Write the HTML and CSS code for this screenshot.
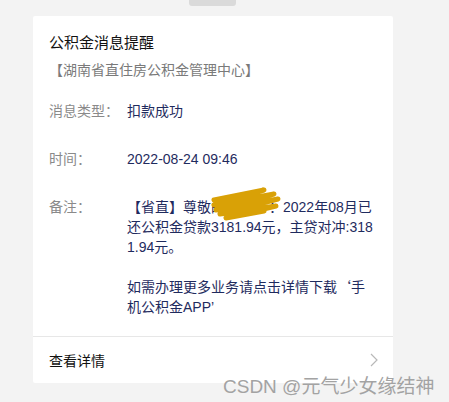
FILE: index.html
```html
<!DOCTYPE html>
<html lang="zh-CN">
<head>
  <meta charset="UTF-8">
  <title>公积金消息提醒</title>
  <link rel="stylesheet" href="styles.css">
</head>
<body>
  <!-- time tag cut off at the top -->
  <div class="time-tag"></div>

  <div class="card">
    <div class="card-body">
      <h1 class="title">公积金消息提醒</h1>
      <p class="sender">【湖南省直住房公积金管理中心】</p>

      <div class="row">
        <span class="label">消息类型：</span>
        <span class="value">扣款成功</span>
      </div>

      <div class="row">
        <span class="label">时间：</span>
        <span class="value">2022-08-24 09:46</span>
      </div>

      <div class="row">
        <span class="label">备注：</span>
        <div class="value">
          <p class="note">【省直】尊敬的<span class="redacted"></span>：2022年08月已<br>还公积金贷款3181.94元，主贷对冲:318<br>1.94元。</p>
          <p class="note">如需办理更多业务请点击详情下载<span class="cjk">‘</span>手<br>机公积金APP’</p>
        </div>
      </div>
    </div>

    <div class="card-footer">
      <span>查看详情</span>
      <svg class="chevron" width="8" height="14" viewBox="0 0 8 14">
        <path d="M1 1 L7 7 L1 13" fill="none" stroke="#b8b8b8" stroke-width="1.2"/>
      </svg>
    </div>
  </div>

  <!-- orange scribble over the name -->
  <svg class="scribble" width="80" height="40" viewBox="0 0 80 40">
    <path d="M6 16 L56 6 L6 21 L66 10 L8 26 L70 15 L12 30 L68 22 L18 34 L56 27"
          fill="none" stroke="#d9a106" stroke-width="5" stroke-linecap="round" stroke-linejoin="round"/>
  </svg>

  <div class="watermark">CSDN @元气少女缘结神</div>
</body>
</html>
```

FILE: styles.css
```css
/* Reset */
* {
  margin: 0;
  padding: 0;
  box-sizing: border-box;
}

body {
  position: relative;
  width: 449px;
  height: 402px;
  overflow: hidden;
  background-color: #f3f3f3;
  font-family: "Liberation Sans", "Noto Sans CJK SC", sans-serif;
  font-size: 14px;
  padding: 16px 0 0 33px;
}

/* Time tag */
.time-tag {
  position: absolute;
  left: 189px;
  top: -6px;
  width: 47px;
  height: 12px;
  border-radius: 3px;
  background-color: #dadada;
}

/* Card */
.card {
  width: 360px;
  height: 367px;
  background-color: #ffffff;
  border-radius: 2px;
  display: flex;
  flex-direction: column;
}

.card-body {
  padding: 16px 16px 19px;
  border-bottom: 1px solid #e7e7e7;
}

.title {
  font-size: 15px;
  font-weight: normal;
  line-height: 22px;
  color: #111111;
}

.sender {
  margin-top: 6px;
  line-height: 20px;
  color: #7a7a7a;
  margin-bottom: 21px;
}

.row {
  display: flex;
  line-height: 20px;
  margin-bottom: 28px;
}

.row:last-child {
  margin-bottom: 0;
}

.label {
  width: 78px;
  flex-shrink: 0;
  color: #8a8a8a;
}

.value {
  color: #1f2b5e;
  white-space: nowrap;
}

.note + .note {
  margin-top: 19px;
}

.redacted {
  display: inline-block;
  width: 44px;
}

.cjk {
  font-family: "Noto Sans CJK SC", sans-serif;
}

.card-footer {
  flex: 1;
  display: flex;
  align-items: center;
  justify-content: space-between;
  padding: 0 15px 0 16px;
  color: #111111;
}

.scribble {
  position: absolute;
  left: 208px;
  top: 184px;
}

.watermark {
  position: absolute;
  left: 223px;
  top: 371px;
  font-size: 19px;
  color: #a3a3a3;
}
```
